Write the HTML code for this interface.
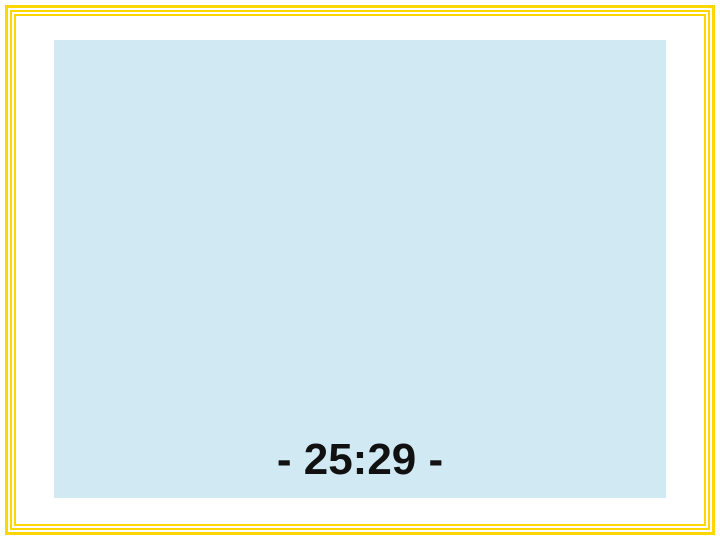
<!DOCTYPE html>
<html><head><style>
html,body{margin:0;padding:0;width:720px;height:540px;background:#fff;overflow:hidden;position:relative}
.b{position:absolute;border:2px solid #ffd700;box-sizing:border-box}
#panel{position:absolute;left:54px;top:40px;width:612px;height:458px;background:#d0e9f2}
#t{position:absolute;left:0;width:720px;top:434px;text-align:center;font:bold 44px "Liberation Sans",sans-serif;color:#111;line-height:52px}
</style></head><body>
<div class="b" style="left:5px;top:5px;right:5px;bottom:5px;border-width:3px"></div>
<div class="b" style="left:10px;top:10px;right:10px;bottom:10px"></div>
<div class="b" style="left:14px;top:14px;right:14px;bottom:14px"></div>
<div id="panel"></div>
<div id="t">- 25:29 -</div>
</body></html>
